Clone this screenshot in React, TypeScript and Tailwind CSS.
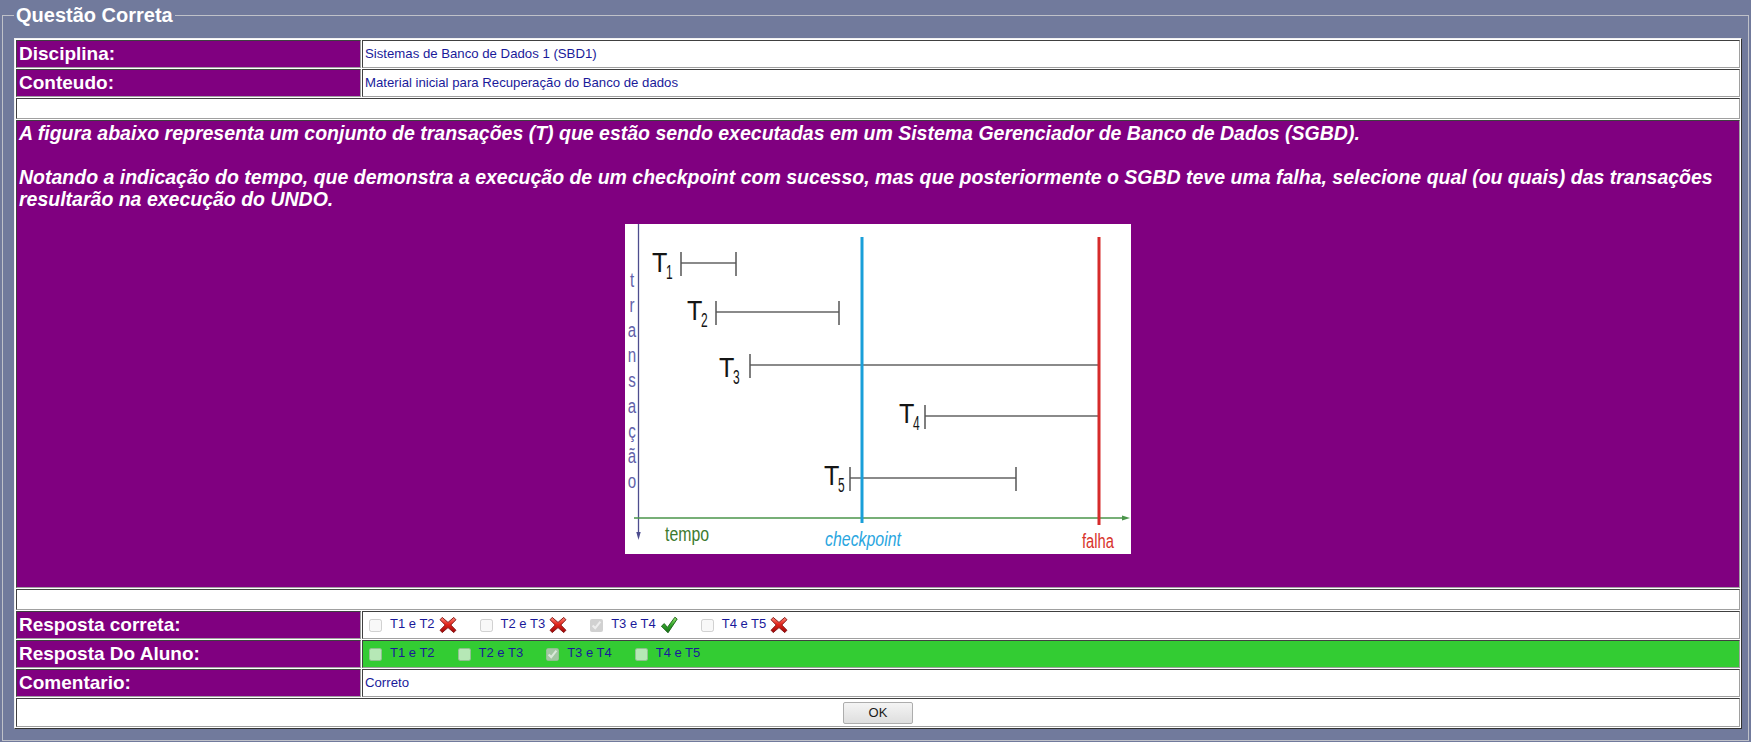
import React from 'react';

type Opt = { label: string; checked: boolean; mark?: 'x' | 'ok' };

const correctOpts: Opt[] = [
  { label: 'T1 e T2', checked: false, mark: 'x' },
  { label: 'T2 e T3', checked: false, mark: 'x' },
  { label: 'T3 e T4', checked: true, mark: 'ok' },
  { label: 'T4 e T5', checked: false, mark: 'x' },
];

const alunoOpts: Opt[] = [
  { label: 'T1 e T2', checked: false },
  { label: 'T2 e T3', checked: false },
  { label: 'T3 e T4', checked: true },
  { label: 'T4 e T5', checked: false },
];

const RedX = () => (
  <svg width="18" height="18" viewBox="0 0 18 18" className="shrink-0">
    <defs>
      <linearGradient id="redx" x1="0" y1="0" x2="0" y2="1">
        <stop offset="0" stopColor="#ff8a7a" />
        <stop offset="0.45" stopColor="#e3261c" />
        <stop offset="1" stopColor="#9c0606" />
      </linearGradient>
    </defs>
    <path
      d="M3.2 1.4 L9 6.4 L14.8 1.4 L16.9 3.8 L11.8 9 L16.9 14.2 L14.8 16.6 L9 11.6 L3.2 16.6 L1.1 14.2 L6.2 9 L1.1 3.8 Z"
      fill="url(#redx)"
      stroke="#7d0b0b"
      strokeWidth="0.9"
      strokeLinejoin="round"
    />
  </svg>
);

const GreenCheck = () => (
  <svg width="18" height="18" viewBox="0 0 18 18" className="shrink-0">
    <defs>
      <linearGradient id="okg" x1="0" y1="0" x2="0" y2="1">
        <stop offset="0" stopColor="#9be86f" />
        <stop offset="0.5" stopColor="#33a62a" />
        <stop offset="1" stopColor="#136d13" />
      </linearGradient>
    </defs>
    <path
      d="M1.4 10.2 L4.3 7.6 L7.4 11.4 L14.9 1.2 L17.2 3 L8 16.8 Z"
      fill="url(#okg)"
      stroke="#155c15"
      strokeWidth="0.9"
      strokeLinejoin="round"
    />
  </svg>
);

const OptionList = ({ opts, name }: { opts: Opt[]; name: string }) => (
  <div className="flex items-center">
    {opts.map((o, i) => (
      <div key={i} className="flex items-start mr-[19px]">
        <input
          type="checkbox"
          name={name}
          disabled
          defaultChecked={o.checked}
          className="m-0 mt-[3px] ml-[4px] mr-[3px] mb-[3px] w-[13px] h-[13px]"
        />
        <span className="ml-[5px] text-[13px] leading-[15px] text-[#1a1a9a]">{o.label}</span>
        {o.mark === 'x' && (
          <span className="ml-[4px]">
            <RedX />
          </span>
        )}
        {o.mark === 'ok' && (
          <span className="ml-[4px]">
            <GreenCheck />
          </span>
        )}
      </div>
    ))}
  </div>
);

const bars = [
  { t: '1', tx: 27, base: 48, x1: 56, x2: 111, y: 39, end: true },
  { t: '2', tx: 62, base: 96, x1: 91, x2: 214, y: 88, end: true },
  { t: '3', tx: 94, base: 153, x1: 125, x2: 474, y: 141, end: false },
  { t: '4', tx: 274, base: 199, x1: 300, x2: 474, y: 192, end: false },
  { t: '5', tx: 199, base: 261, x1: 225, x2: 391, y: 254, end: true },
];

const axisLetters = ['t', 'r', 'a', 'n', 's', 'a', 'ç', 'ã', 'o'];

const Chart = () => (
  <svg width="506" height="330" viewBox="0 0 506 330" className="block bg-white" fontFamily="'Liberation Sans', Arial, sans-serif">
    <rect x="0" y="0" width="506" height="330" fill="#ffffff" />
    {/* eixo vertical */}
    <line x1="13.5" y1="0" x2="13.5" y2="311" stroke="#4d4d8e" strokeWidth="1.3" />
    <path d="M11.3 308 L13.5 316 L15.7 308 Z" fill="#4d4d8e" />
    {axisLetters.map((l, i) => (
      <text
        key={i}
        textAnchor="middle"
        transform={`translate(7 ${63 + i * 25.1}) scale(0.72 1)`}
        fontSize="21"
        fill="#6262aa"
      >
        {l}
      </text>
    ))}
    {/* eixo horizontal */}
    <line x1="9" y1="294" x2="500" y2="294" stroke="#4a944a" strokeWidth="1.3" />
    <path d="M497 291.6 L505 294 L497 296.4 Z" fill="#4a944a" />

    {bars.map((b) => (
      <g key={b.t}>
        <text transform={`translate(${b.tx} ${b.base}) scale(0.9 1)`} fontSize="28" fill="#151515">
          T
        </text>
        <text transform={`translate(${b.tx + 14} ${b.base + 7}) scale(0.6 1)`} fontSize="20" fill="#151515">
          {b.t}
        </text>
        <line x1={b.x1} y1={b.y} x2={b.x2} y2={b.y} stroke="#8a8a8a" strokeWidth="2.2" />
        <line x1={b.x1} y1={b.y - 11} x2={b.x1} y2={b.y + 13} stroke="#555555" strokeWidth="1.5" />
        {b.end && <line x1={b.x2} y1={b.y - 11} x2={b.x2} y2={b.y + 13} stroke="#555555" strokeWidth="1.5" />}
      </g>
    ))}

    <line x1="237" y1="13" x2="237" y2="299" stroke="#1a9fd9" strokeWidth="3" />
    <line x1="474" y1="13" x2="474" y2="301" stroke="#d62b2b" strokeWidth="3" />

    <text x="40" y="317" fontSize="20" fill="#3d7a2e" textLength="44" lengthAdjust="spacingAndGlyphs">
      tempo
    </text>
    <text x="200" y="322" fontSize="20" fontStyle="italic" fill="#2aa6e0" textLength="76" lengthAdjust="spacingAndGlyphs">
      checkpoint
    </text>
    <text x="457" y="324" fontSize="20" fill="#d8342c" textLength="32" lengthAdjust="spacingAndGlyphs">
      falha
    </text>
  </svg>
);

const cellBorder = 'border border-t-[#404040] border-l-[#404040] border-b-[#a0a0a0] border-r-[#a0a0a0]';

const LabelCell = ({ children }: { children: React.ReactNode }) => (
  <div className={`flex items-center h-[28px] px-[2px] bg-[#800080] text-white font-bold text-[19px] ${cellBorder}`}>
    {children}
  </div>
);

const ValueCell = ({ children, green }: { children: React.ReactNode; green?: boolean }) => (
  <div
    className={`flex items-center h-[28px] px-[2px] text-[13.2px] text-[#1a1a9a] ${green ? 'bg-[#33cc33]' : 'bg-white'} ${cellBorder}`}
  >
    {children}
  </div>
);

export default function App() {
  return (
    <div className="min-h-screen bg-[#717a9c] pt-[4px] font-['Liberation_Sans',Arial,sans-serif]">
      <fieldset className="mx-[2px] border border-[#bfc1c9] pl-[11px] pr-[6px] pt-[12px] pb-[11px]">
        <legend className="px-[2px] text-[20px] leading-[22px] font-bold text-white">Questão Correta</legend>

        <div className="grid grid-cols-[345px_1fr] gap-px p-px bg-white border border-t-[#f0f0f0] border-l-[#f0f0f0] border-b-[#333333] border-r-[#333333]">
          <LabelCell>Disciplina:</LabelCell>
          <ValueCell>Sistemas de Banco de Dados 1 (SBD1)</ValueCell>

          <LabelCell>Conteudo:</LabelCell>
          <ValueCell>Material inicial para Recuperação do Banco de dados</ValueCell>

          <div className={`col-span-2 h-[21px] bg-white ${cellBorder}`} />

          <div className={`col-span-2 h-[468px] px-[2px] pt-px bg-[#800080] ${cellBorder}`}>
            <p className="font-bold italic text-white text-[19.5px] leading-[22px]">
              A figura abaixo representa um conjunto de transações (T) que estão sendo executadas em um Sistema
              Gerenciador de Banco de Dados (SGBD).
              <br />
              <br />
              Notando a indicação do tempo, que demonstra a execução de um checkpoint com sucesso, mas que
              posteriormente o SGBD teve uma falha, selecione qual (ou quais) das transações resultarão na execução
              do UNDO.
            </p>
            <div className="mt-[14px] flex justify-center">
              <Chart />
            </div>
          </div>

          <div className={`col-span-2 h-[21px] bg-white ${cellBorder}`} />

          <LabelCell>Resposta correta:</LabelCell>
          <ValueCell>
            <OptionList opts={correctOpts} name="correta" />
          </ValueCell>

          <LabelCell>Resposta Do Aluno:</LabelCell>
          <ValueCell green>
            <OptionList opts={alunoOpts} name="aluno" />
          </ValueCell>

          <LabelCell>Comentario:</LabelCell>
          <ValueCell>Correto</ValueCell>

          <div className={`col-span-2 h-[29px] flex items-center justify-center bg-white ${cellBorder}`}>
            <button className="w-[70px] h-[22px] rounded-[2px] border border-[#adadad] bg-gradient-to-b from-[#f4f4f4] to-[#dedede] text-[13px] text-[#1a1a1a]">
              OK
            </button>
          </div>
        </div>
      </fieldset>
    </div>
  );
}
